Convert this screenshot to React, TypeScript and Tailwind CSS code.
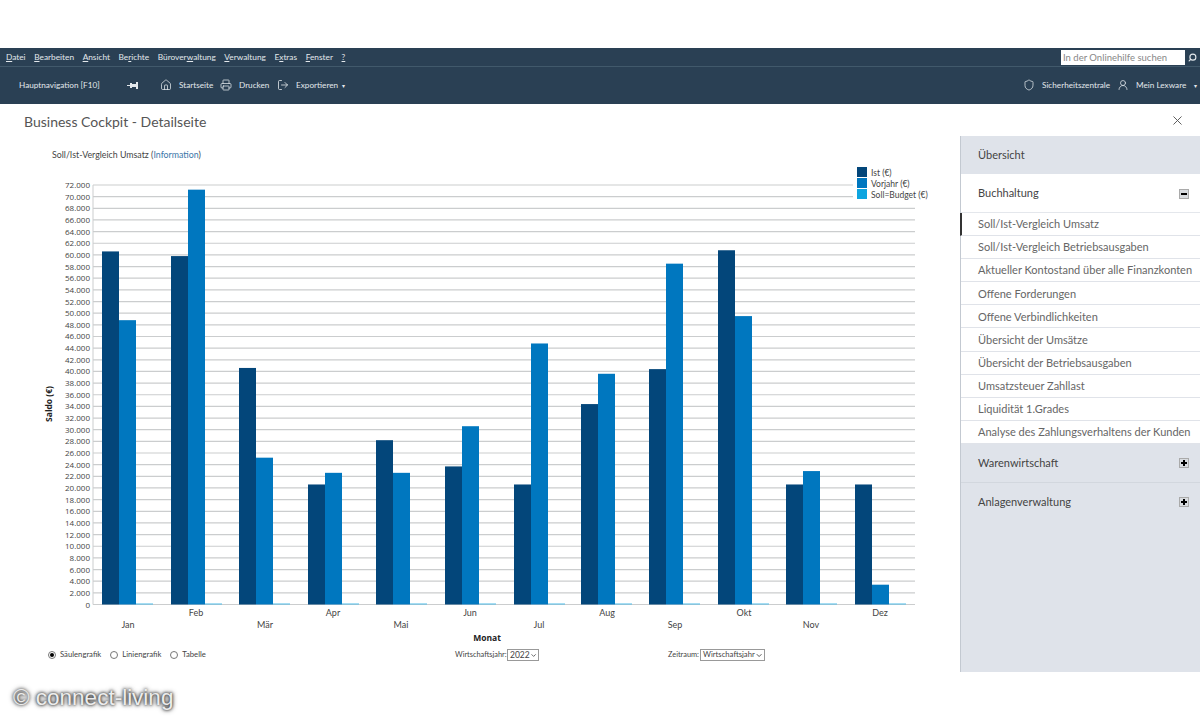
import { ChevronDown, House, LogOut, Printer, Search, Shield, UserRound, X } from 'lucide-react';

const menu: [string, string, string][] = [
  ['', 'D', 'atei'],
  ['', 'B', 'earbeiten'],
  ['', 'A', 'nsicht'],
  ['Be', 'r', 'ichte'],
  ['Bürover', 'w', 'altung'],
  ['', 'V', 'erwaltung'],
  ['E', 'x', 'tras'],
  ['', 'F', 'enster'],
  ['', '?', ''],
];

// x of the dark bar, label centre, Ist, Vorjahr
const months: [string, number, number, number, number][] = [
  ['Jan', 102, 128, 60600, 48800],
  ['Feb', 171, 196, 59800, 71200],
  ['Mär', 239, 265, 40600, 25200],
  ['Apr', 308, 333, 20600, 22600],
  ['Mai', 376, 401, 28200, 22600],
  ['Jun', 445, 470, 23700, 30600],
  ['Jul', 514, 539, 20600, 44800],
  ['Aug', 581, 607, 34400, 39600],
  ['Sep', 649, 675, 40400, 58500],
  ['Okt', 718, 744, 60800, 49500],
  ['Nov', 786, 811, 20600, 22900],
  ['Dez', 855, 880, 20600, 3400],
];

const buchhaltung = [
  'Soll/Ist-Vergleich Umsatz',
  'Soll/Ist-Vergleich Betriebsausgaben',
  'Aktueller Kontostand über alle Finanzkonten',
  'Offene Forderungen',
  'Offene Verbindlichkeiten',
  'Übersicht der Umsätze',
  'Übersicht der Betriebsausgaben',
  'Umsatzsteuer Zahllast',
  'Liquidität 1.Grades',
  'Analyse des Zahlungsverhaltens der Kunden',
];

const ticks = Array.from({ length: 37 }, (_, i) => i * 2000);
const y0 = 604.5;
const yOf = (v: number) => y0 - (v / 72000) * 419.5;
const fmt = (v: number) => v.toLocaleString('de-DE');

function Chart() {
  return (
    <svg viewBox="0 165 960 482" className="w-[960px] h-[482px] block" fontFamily="'Open Sans', sans-serif">
      {ticks.map((t) => (
        <g key={t}>
          <line x1="93" x2="915" y1={yOf(t)} y2={yOf(t)} stroke="#cbcdce" strokeWidth="1.2" />
          <text x="90" y={yOf(t) + 3} textAnchor="end" fontSize="8" fill="#444">{fmt(t)}</text>
        </g>
      ))}
      <line x1="93" x2="93" y1="185" y2={y0} stroke="#cbcdce" />
      {months.map(([name, x, cx, ist, vor], i) => (
        <g key={name}>
          <rect x={x} y={yOf(ist)} width="17" height={y0 - yOf(ist)} fill="#03467a" />
          <rect x={x + 17} y={yOf(vor)} width="17" height={y0 - yOf(vor)} fill="#0077bf" />
          <rect x={x + 34} y={y0 - 1} width="17" height="1" fill="#4dbbe8" />
          <text x={cx} y={i % 2 ? 616 : 628} textAnchor="middle" fontSize="9" fontFamily="Lato, sans-serif" fill="#444">{name}</text>
        </g>
      ))}
      <text transform="translate(52 404) rotate(-90)" textAnchor="middle" fontSize="8.5" fontWeight="700" fill="#222">Saldo (€)</text>
      <text x="487" y="641" textAnchor="middle" fontSize="8.5" fontWeight="700" fill="#222">Monat</text>
      <rect x="853" y="165" width="80" height="38" fill="#fff" />
      <rect x="857" y="167" width="10" height="10" fill="#03467a" />
      <rect x="857" y="178" width="10" height="10" fill="#0077bf" />
      <rect x="857" y="189" width="10" height="10" fill="#0ea5e0" />
      <g fontFamily="Lato, sans-serif" fontSize="8.5" fill="#444">
        <text x="871" y="176">Ist (€)</text>
        <text x="871" y="187">Vorjahr (€)</text>
        <text x="871" y="198">Soll=Budget (€)</text>
      </g>
    </svg>
  );
}

function Radio({ label, checked }: { label: string; checked?: boolean }) {
  return (
    <div className="flex items-center gap-[4px]">
      <span className="w-[8px] h-[8px] rounded-full border border-[#777] flex items-center justify-center">
        {checked && <span className="w-[4px] h-[4px] rounded-full bg-black" />}
      </span>
      <span>{label}</span>
    </div>
  );
}

function Toggle({ open }: { open?: boolean }) {
  return (
    <span className="w-[10px] h-[10px] bg-[#d9dce0] border border-[#aaa] relative block">
      <span className="absolute left-[1px] right-[1px] top-[3px] h-[2px] bg-black" />
      {!open && <span className="absolute top-[1px] bottom-[1px] left-[3px] w-[2px] bg-black" />}
    </span>
  );
}

export default function App() {
  return (
    <div className="relative w-[1200px] h-[720px] overflow-hidden bg-white font-['Lato',sans-serif] text-[#444]">
      <div className="h-[48px]" />

      <header className="bg-[#2a4054] text-[#e3e8ec]">
        <div className="h-[19px] flex items-center justify-between border-b border-[#41596b] text-[8.3px]">
          <nav className="flex items-center gap-[8.6px] pl-[6px]">
            {menu.map(([a, u, b]) => (
              <span key={a + u + b}>
                {a}<span className="underline">{u}</span>{b}
              </span>
            ))}
          </nav>
          <div className="flex items-center">
            <div className="w-[124px] h-[15px] bg-white text-[#888] text-[9.5px] leading-[15px] pl-[2px]">In der Onlinehilfe suchen</div>
            <Search size={9} strokeWidth={3} className="mx-[3px] -scale-x-100" />
          </div>
        </div>
        <div className="h-[37px] flex items-center justify-between text-[8.2px]">
          <div className="flex items-center pl-[19px]">
            <span className="w-[80px] whitespace-nowrap">Hauptnavigation [F10]</span>
            <svg width="11" height="7" viewBox="0 0 11 7" className="ml-[28px]" fill="#e3e8ec">
              <rect x="0" y="3" width="4" height="1" />
              <rect x="3" y="1" width="2" height="5" />
              <rect x="5" y="2" width="4" height="3" />
              <rect x="9" y="0" width="2" height="7" />
            </svg>
            <House size={12} strokeWidth={1.5} className="ml-[22px]" />
            <span className="ml-[7px] w-[34px] whitespace-nowrap">Startseite</span>
            <Printer size={12} strokeWidth={1.5} className="ml-[7px]" />
            <span className="ml-[7px] w-[30px] whitespace-nowrap">Drucken</span>
            <LogOut size={12} strokeWidth={1.6} className="ml-[8px]" />
            <span className="ml-[7px] w-[44px] whitespace-nowrap">Exportieren</span>
            <span className="ml-[2px] text-[6px]">▾</span>
          </div>
          <div className="flex items-center pr-[3px]">
            <Shield size={12} strokeWidth={1.5} />
            <span className="ml-[7px] w-[68px] whitespace-nowrap">Sicherheitszentrale</span>
            <UserRound size={12} strokeWidth={1.5} className="ml-[7px]" />
            <span className="ml-[7px] w-[50px] whitespace-nowrap">Mein Lexware</span>
            <span className="ml-[8px] text-[6px]">▾</span>
          </div>
        </div>
      </header>

      <div className="h-[32px] flex items-center justify-between pl-[24px] pr-[15px]">
        <h1 className="text-[14px] text-[#555] relative top-[1px]">Business Cockpit - Detailseite</h1>
        <X size={15} strokeWidth={1.5} className="text-[#555]" />
      </div>

      <main className="flex items-start">
        <section className="w-[960px]">
          <p className="pl-[52px] pt-[13px] h-[29px] text-[8.8px] leading-[11px]">
            Soll/Ist-Vergleich Umsatz (<span className="text-[#3a75a8]">Information</span>)
          </p>
          <Chart />
          <div className="flex items-center text-[7.7px] pl-[48px] mt-[2px]">
            <div className="w-[407px] flex items-center gap-[9px]">
              <Radio label="Säulengrafik" checked />
              <Radio label="Liniengrafik" />
              <Radio label="Tabelle" />
            </div>
            <div className="w-[213px] flex items-center gap-[2px]">
              <span className="w-[50px] whitespace-nowrap text-[7.4px]">Wirtschaftsjahr:</span>
              <div className="w-[32px] h-[12px] border border-[#999] flex items-center justify-between pl-[2px] pr-[1px] text-[8.5px]">
                2022<ChevronDown size={11} strokeWidth={2.2} className="text-[#222]" />
              </div>
            </div>
            <div className="flex items-center gap-[3px]">
              <span className="w-[29px] whitespace-nowrap text-[7.4px]">Zeitraum:</span>
              <div className="w-[65px] h-[12px] border border-[#999] flex items-center justify-between pl-[2px] pr-[1px]">
                Wirtschaftsjahr<ChevronDown size={11} strokeWidth={2.2} className="text-[#222]" />
              </div>
            </div>
          </div>
        </section>

        <aside className="w-[240px] h-[536px] bg-[#dfe3ea] border-l border-[#c3c9d1] text-[11px] text-[#444] whitespace-nowrap">
          <div className="h-[38px] flex items-center pl-[17px]">Übersicht</div>
          <div className="h-[38px] bg-white flex items-center justify-between pl-[17px] pr-[11px] pt-[1px]">
            Buchhaltung
            <Toggle open />
          </div>
          <ul className="bg-white border-t border-[#e4e7ec]">
            {buchhaltung.map((item, i) => (
              <li
                key={item}
                className={`h-[23.1px] flex items-center border-b border-[#e0e3e9] text-[#666] pt-[1px] ${
                  i === 0 ? 'pl-[16px] border-l-2 border-l-[#333] -ml-[1px]' : 'pl-[17px]'
                }`}
              >
                {item}
              </li>
            ))}
          </ul>
          <div className="h-[39px] flex items-center justify-between pl-[17px] pr-[11px] border-b border-[#d2d7de]">
            Warenwirtschaft
            <Toggle />
          </div>
          <div className="h-[39px] flex items-center justify-between pl-[17px] pr-[11px]">
            Anlagenverwaltung
            <Toggle />
          </div>
        </aside>
      </main>

      <div className="absolute left-[13px] top-[686px] font-['Liberation_Sans',sans-serif] text-[22.5px] leading-[24px] text-[#ececec] [text-shadow:0_0_3px_#111,0_0_5px_#333]">
        © connect-living
      </div>
    </div>
  );
}
